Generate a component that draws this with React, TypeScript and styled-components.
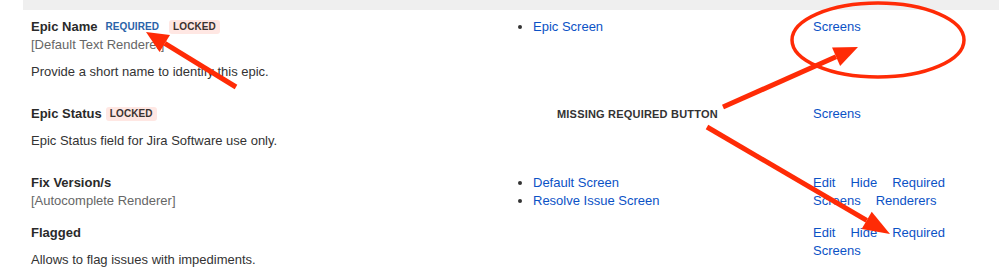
import React from "react";
import styled, { createGlobalStyle } from "styled-components";

const Global = createGlobalStyle`
  html, body { margin: 0; padding: 0; background: #fff; }
  body { font-family: "Liberation Sans", Arial, sans-serif; }
`;

const Page = styled.div`
  position: relative;
  width: 999px;
  height: 278px;
  overflow: hidden;
  background: #fff;
`;

const HeaderBand = styled.div`
  margin-left: 23px;
  height: 10px;
  background: #efefef;
`;

const Table = styled.div`
  margin-left: 23px;
  padding-top: 1px;
`;

const Row = styled.div`
  display: grid;
  grid-template-columns: 482px 308px 1fr;
  align-items: start;
  padding: 7px 0;
`;

const FieldCell = styled.div`
  padding-left: 8px;
  font-size: 13px;
  line-height: 18px;
  color: #333;
`;

const TitleLine = styled.div`
  display: flex;
  align-items: center;
  height: 18px;
  gap: 4px;
`;

const Title = styled.span`
  font-weight: bold;
  color: #2a2a2a;
`;

const Lozenge = styled.span<{ $tone: "blue" | "red" }>`
  display: inline-flex;
  align-items: center;
  height: 14px;
  padding: 0 4px;
  border-radius: 3px;
  font-size: 10px;
  font-weight: bold;
  letter-spacing: 0.1px;
  background: ${(p) => (p.$tone === "red" ? "#ffe7e3" : "#ffffff")};
  color: ${(p) => (p.$tone === "red" ? "#3a3230" : "#2a62a8")};
  & + & {
    margin-left: 2px;
  }
`;

const Renderer = styled.div`
  color: #666;
`;

const Description = styled.p`
  margin: 9px 0 10px;
  color: #333;
`;

const ScreensCell = styled.div`
  font-size: 13px;
  line-height: 18px;
`;

const ScreenList = styled.ul`
  margin: 0;
  padding-left: 28px;
  list-style: disc;
  color: #333;
`;

const Link = styled.a`
  color: #0b52c6;
  text-decoration: none;
`;

const Note = styled.div`
  padding-left: 52px;
  height: 18px;
  display: flex;
  align-items: center;
  font-size: 11px;
  font-weight: bold;
  letter-spacing: 0.2px;
  color: #333;
`;

const Ops = styled.div`
  display: flex;
  flex-wrap: wrap;
  align-content: flex-start;
  column-gap: 15px;
  width: 145px;
  font-size: 13px;
  line-height: 18px;
`;

const Overlay = styled.svg`
  position: absolute;
  left: 0;
  top: 0;
  pointer-events: none;
`;

type Field = {
  name: string;
  lozenges?: { text: string; tone: "blue" | "red" }[];
  renderer?: string;
  description?: string;
  screens?: string[];
  note?: string;
  ops: string[];
};

const fields: Field[] = [
  {
    name: "Epic Name",
    lozenges: [
      { text: "REQUIRED", tone: "blue" },
      { text: "LOCKED", tone: "red" },
    ],
    renderer: "[Default Text Renderer]",
    description: "Provide a short name to identify this epic.",
    screens: ["Epic Screen"],
    ops: ["Screens"],
  },
  {
    name: "Epic Status",
    lozenges: [{ text: "LOCKED", tone: "red" }],
    description: "Epic Status field for Jira Software use only.",
    note: "MISSING REQUIRED BUTTON",
    ops: ["Screens"],
  },
  {
    name: "Fix Version/s",
    renderer: "[Autocomplete Renderer]",
    screens: ["Default Screen", "Resolve Issue Screen"],
    ops: ["Edit", "Hide", "Required", "Screens", "Renderers"],
  },
  {
    name: "Flagged",
    description: "Allows to flag issues with impediments.",
    ops: ["Edit", "Hide", "Required", "Screens"],
  },
];

const RED = "#ff2b06";

function arrowHead(tx: number, ty: number, fx: number, fy: number, len: number, half: number) {
  const dx = tx - fx;
  const dy = ty - fy;
  const m = Math.hypot(dx, dy);
  const ux = dx / m;
  const uy = dy / m;
  const bx = tx - ux * len;
  const by = ty - uy * len;
  const nx = -uy * half;
  const ny = ux * half;
  return {
    points: `${tx},${ty} ${bx + nx},${by + ny} ${bx - nx},${by - ny}`,
    bx,
    by,
  };
}

const arrows = [
  { fx: 236, fy: 87, tx: 146, ty: 32, len: 22, half: 10 },
  { fx: 723, fy: 107, tx: 858, ty: 47, len: 24, half: 10 },
  { fx: 707, fy: 127, tx: 890, ty: 234, len: 27, half: 10 },
];

export default function App() {
  return (
    <Page>
      <Global />
      <HeaderBand />
      <Table>
        {fields.map((f) => (
          <Row key={f.name}>
            <FieldCell>
              <TitleLine>
                <Title>{f.name}</Title>
                {f.lozenges?.map((l) => (
                  <Lozenge key={l.text} $tone={l.tone}>
                    {l.text}
                  </Lozenge>
                ))}
              </TitleLine>
              {f.renderer && <Renderer>{f.renderer}</Renderer>}
              {f.description && <Description>{f.description}</Description>}
            </FieldCell>
            <ScreensCell>
              {f.screens && (
                <ScreenList>
                  {f.screens.map((s) => (
                    <li key={s}>
                      <Link href="#">{s}</Link>
                    </li>
                  ))}
                </ScreenList>
              )}
              {f.note && <Note>{f.note}</Note>}
            </ScreensCell>
            <Ops>
              {f.ops.map((o) => (
                <Link key={o} href="#">
                  {o}
                </Link>
              ))}
            </Ops>
          </Row>
        ))}
      </Table>
      <Overlay width={999} height={278} viewBox="0 0 999 278">
        <ellipse cx={878} cy={40} rx={86} ry={37} fill="none" stroke={RED} strokeWidth={3.5} />
        {arrows.map((a, i) => {
          const h = arrowHead(a.tx, a.ty, a.fx, a.fy, a.len, a.half);
          return (
            <g key={i}>
              <line
                x1={a.fx}
                y1={a.fy}
                x2={h.bx}
                y2={h.by}
                stroke={RED}
                strokeWidth={5}
                strokeLinecap="butt"
              />
              <polygon points={h.points} fill={RED} />
            </g>
          );
        })}
      </Overlay>
    </Page>
  );
}
